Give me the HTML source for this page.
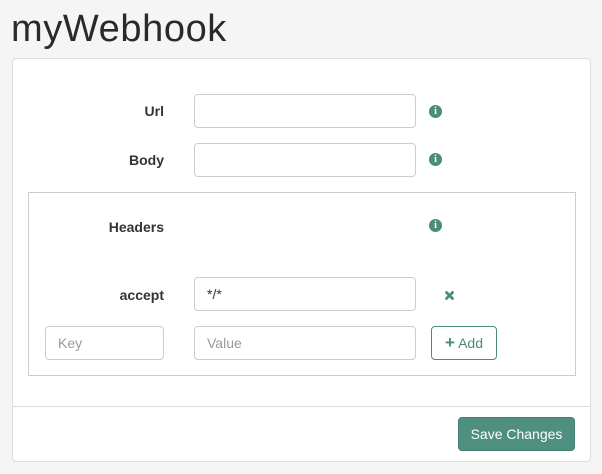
<!DOCTYPE html>
<html><head><meta charset="utf-8"><style>
*{box-sizing:border-box;margin:0;padding:0}
body{width:602px;height:474px;background:#f5f5f5;font-family:"Liberation Sans",Helvetica,Arial,sans-serif;color:#333;position:relative;overflow:hidden;font-size:14px}
.abs{position:absolute}
h1{position:absolute;left:11px;top:6px;font-size:38px;font-weight:400;color:#2a2a2a;letter-spacing:0.6px;line-height:46px}
.panel{left:12px;top:58px;width:579px;height:404px;background:#fff;border:1px solid #ddd;border-radius:4px}
.foot{left:13px;top:406px;width:577px;height:1px;background:#ddd}
.inner{left:28px;top:192px;width:548px;height:184px;border:1px solid #ccc}
.lbl{font-weight:bold;font-size:14px;text-align:right;width:140px;left:24px}
.inp{border:1px solid #ccc;border-radius:4px;height:34px;background:#fff;font-size:14px;padding:0 12px;line-height:32px}
.ph{color:#999}
.info{width:13px;height:13px;border-radius:50%;background:#4a8b7b;color:#fff;font-size:10px;font-weight:bold;text-align:center;line-height:13px;font-family:"Liberation Serif",serif}
.btn{border-radius:4px;font-size:14px;text-align:center}
</style></head><body>
<h1>myWebhook</h1>
<div class="abs panel"></div>
<div class="abs foot"></div>
<div class="abs inner"></div>

<div class="abs lbl" style="top:103px">Url</div>
<div class="abs inp" style="left:194px;top:94px;width:222px"></div>
<div class="abs info" style="left:429px;top:105px">i</div>

<div class="abs lbl" style="top:152px">Body</div>
<div class="abs inp" style="left:194px;top:143px;width:222px"></div>
<div class="abs info" style="left:429px;top:153px">i</div>

<div class="abs lbl" style="top:219px">Headers</div>
<div class="abs info" style="left:429px;top:219px">i</div>

<div class="abs lbl" style="top:287px">accept</div>
<div class="abs inp" style="left:194px;top:277px;width:222px">*/*</div>
<svg class="abs" style="left:445px;top:291px" width="9" height="9" viewBox="0 0 9 9"><path d="M1.5 1.5L7.5 7.5M7.5 1.5L1.5 7.5" stroke="#4a8b7b" stroke-width="2.8" stroke-linecap="round"/></svg>

<div class="abs inp ph" style="left:45px;top:326px;width:119px">Key</div>
<div class="abs inp ph" style="left:194px;top:326px;width:222px">Value</div>
<div class="abs btn" style="left:431px;top:326px;width:66px;height:34px;border:1px solid #4a8b7b;color:#4a8b7b;line-height:32px"><b style="font-size:17px">+</b> Add</div>

<div class="abs btn" style="left:458px;top:417px;width:117px;height:34px;background:#4f8f80;border:1px solid #468173;color:#fff;line-height:32px">Save Changes</div>
</body></html>
